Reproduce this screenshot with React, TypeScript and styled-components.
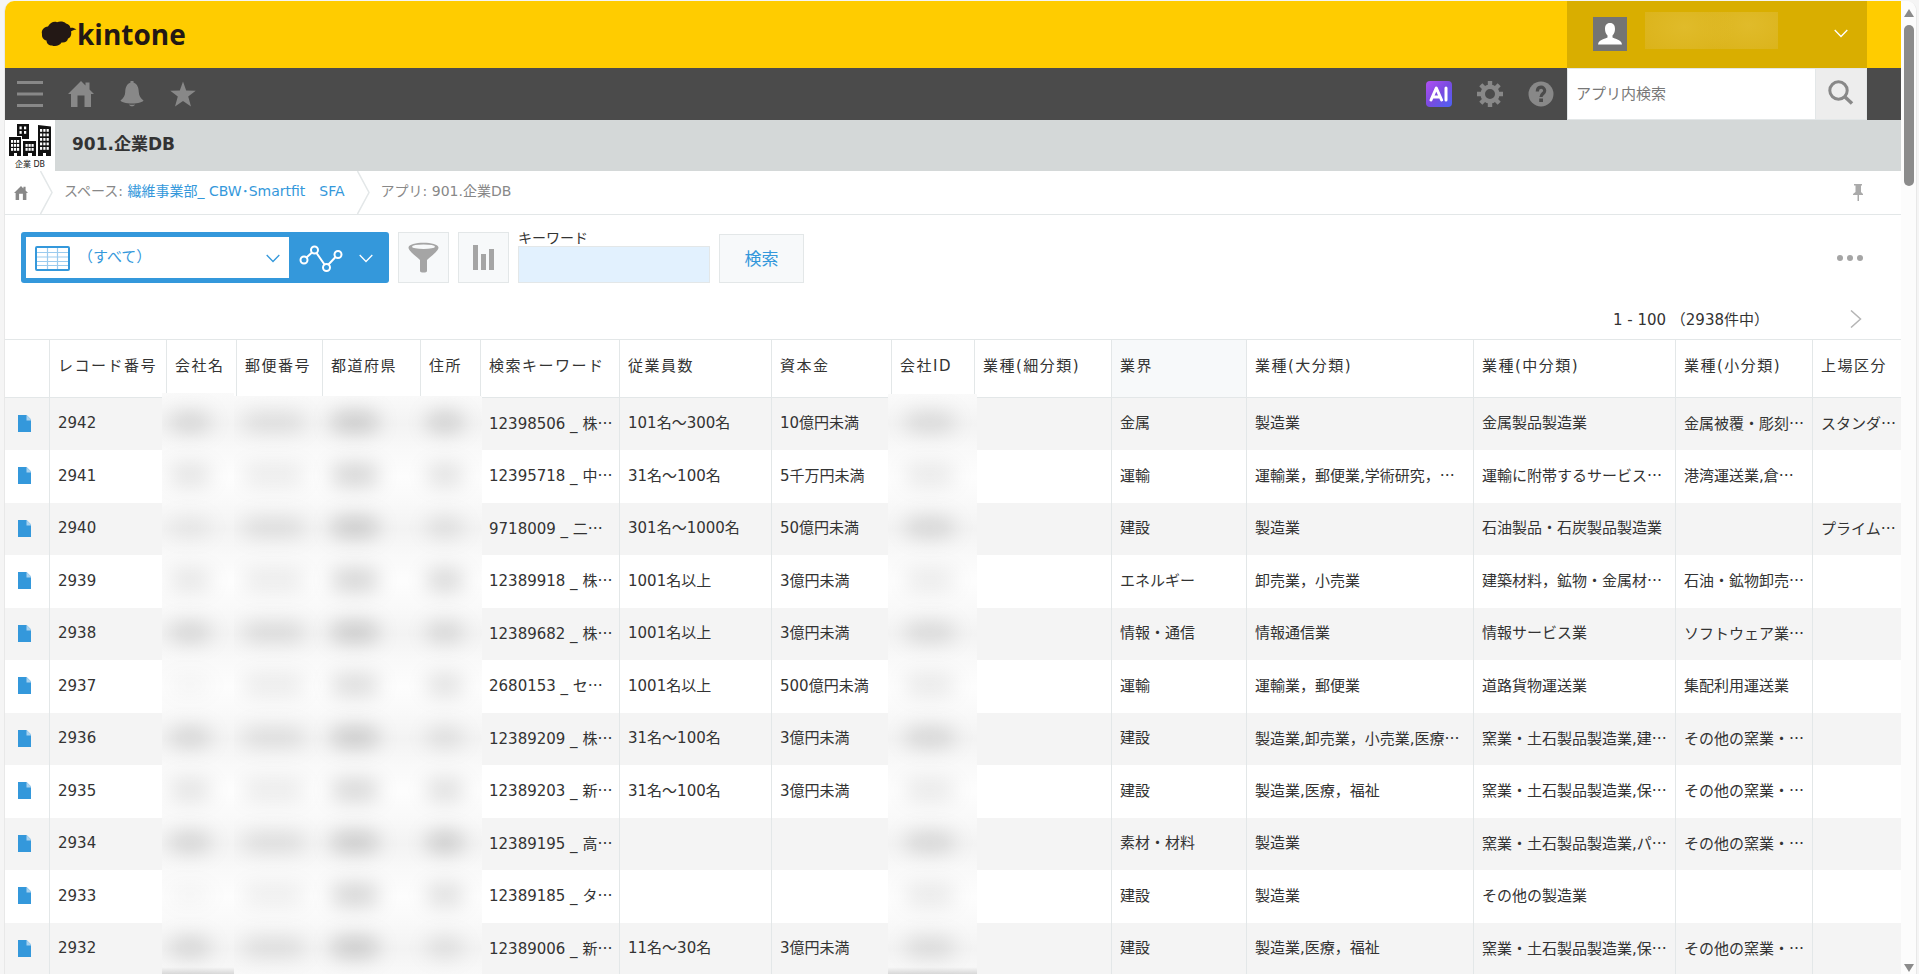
import React from "react";
import styled, { createGlobalStyle } from "styled-components";

const BLUE = "#3498db";
const LINE = "#e3e7e8";
const ICON = "#888888";

const GlobalStyle = createGlobalStyle`
  * { box-sizing: border-box; }
  html, body, #root { height: 100%; }
  body {
    margin: 0;
    overflow: hidden;
    background: #f5f5f5;
    color: #333333;
    font-family: "DejaVu Sans", "Noto Sans CJK JP", sans-serif;
    font-size: 15px;
  }
  button, input, select { font-family: inherit; }
  svg { display: block; flex: none; }
`;

/* ---------- window frame ---------- */

const Frame = styled.div`
  height: 100vh;
  padding: 1px 2px 0 4px;
  background: #f5f5f5;
`;

const Viewport = styled.div`
  height: 100%;
  display: flex;
  overflow: hidden;
  border-left: 1px solid #e8e8e8;
  border-right: 1px solid #e8e8e8;
  border-radius: 10px 10px 0 0;
  background: #ffffff;
`;

const Page = styled.div`
  flex: 1;
  min-width: 0;
  overflow: hidden;
`;

const Scrollbar = styled.div`
  flex: none;
  width: 15px;
  padding: 8px 0 2px;
  display: flex;
  flex-direction: column;
  align-items: center;
  background: #fcfcfc;
`;

const ScrollTrack = styled.div`
  flex: 1;
  padding-top: 8px;
`;

const ScrollThumb = styled.div`
  width: 10px;
  height: 161px;
  border-radius: 5px;
  background: #8b8b8b;
`;

/* ---------- header ---------- */

const BrandBar = styled.header`
  height: 67px;
  padding: 0 34px 0 36px;
  display: flex;
  justify-content: space-between;
  background: #ffcc00;
`;

const Brand = styled.a`
  padding-bottom: 2px;
  display: flex;
  align-items: center;
  color: #231815;
  text-decoration: none;
`;

const BrandName = styled.span`
  font: 700 28px/40px "Open Sans", sans-serif;
`;

const UserMenu = styled.button`
  width: 300px;
  padding: 0 19px 2px 26px;
  display: flex;
  align-items: center;
  gap: 18px;
  border: 0;
  background: #d9ae00;
`;

const Avatar = styled.span`
  width: 34px;
  height: 34px;
  background: #747474;
`;

const HiddenName = styled.span`
  width: 133px;
  height: 37px;
  margin: 0 auto 6px 0;
  background:
    radial-gradient(ellipse 50px 34px at 30% 40%, #e0bb2a, transparent),
    radial-gradient(ellipse 50px 34px at 78% 35%, #e0bb2a, transparent),
    #dbb31a;
`;

const NavBar = styled.nav`
  height: 52px;
  padding: 0 34px 0 12px;
  display: flex;
  justify-content: space-between;
  background: #4b4b4b;
`;

const NavGroup = styled.div`
  display: flex;
  align-items: center;
  gap: 25px;
`;

const IconButton = styled.button`
  width: 26px;
  height: 26px;
  padding: 0;
  border: 0;
  background: none;
  color: ${ICON};
`;

const NavTools = styled.div`
  display: flex;
  gap: 13px;
`;

const SearchForm = styled.form`
  width: 300px;
  display: flex;
`;

const SearchInput = styled.input`
  flex: 1;
  min-width: 0;
  padding: 0 8px;
  border: 1px solid ${LINE};
  border-right: 0;
  border-radius: 0;
  background: #ffffff;
  font-size: 15px;
  &::placeholder { color: #777777; opacity: 1; }
`;

const SearchButton = styled.button`
  width: 52px;
  padding: 0 0 2px 12px;
  border: 1px solid ${LINE};
  background: #ededed;
`;

const TitleBar = styled.div`
  height: 51px;
  display: flex;
  align-items: center;
  gap: 17px;
  background: #d4d8d8;
`;

const AppIcon = styled.div`
  width: 50px;
  height: 51px;
  padding-top: 3px;
  display: flex;
  flex-direction: column;
  align-items: center;
  background: #ffffff;
`;

const AppIconCaption = styled.span`
  font-size: 8px;
  line-height: 16px;
  color: #222222;
  white-space: nowrap;
`;

const AppTitle = styled.h1`
  margin: 0 0 4px;
  font-size: 17px;
  line-height: 24px;
  font-weight: 700;
`;

const Breadcrumb = styled.div`
  height: 44px;
  padding: 0 38px 0 9px;
  display: flex;
  align-items: center;
  border-bottom: 1px solid ${LINE};
  color: ${ICON};
  font-size: 14px;
`;

const Crumb = styled.span`
  padding: 0 0 6px 11px;
  white-space: pre;
  & + svg { margin-left: 12px; }
`;

const CrumbLink = styled.a`
  color: ${BLUE};
  text-decoration: none;
`;

const HomeLink = styled.a`
  margin-right: 12px;
  color: ${ICON};
`;

const PinButton = styled.button`
  margin-left: auto;
  padding: 0;
  border: 0;
  background: none;
  color: #aaaaaa;
`;

/* ---------- toolbar ---------- */

const Toolbar = styled.div`
  padding: 16px 38px 0 16px;
  display: flex;
  align-items: flex-end;
  gap: 9px;
`;

const ViewPicker = styled.div`
  width: 368px;
  height: 51px;
  padding: 5px 0 5px 5px;
  display: flex;
  border-radius: 3px;
  background: ${BLUE};
`;

const ViewChoice = styled.div`
  width: 263px;
  padding: 2px 9px 0;
  display: flex;
  align-items: center;
  background: #ffffff;
`;

const ViewSelect = styled.select`
  flex: 1;
  min-width: 0;
  height: 36px;
  margin-bottom: 4px;
  padding: 0 0 0 8px;
  border: 0;
  appearance: none;
  background: none;
  color: ${BLUE};
  font-size: 15px;
`;

const GraphButton = styled.button`
  flex: 1;
  padding: 2px 16px 0 10px;
  display: flex;
  align-items: center;
  justify-content: space-between;
  border: 0;
  background: none;
`;

const ToolButton = styled.button`
  width: 51px;
  height: 51px;
  padding: 0;
  display: flex;
  align-items: center;
  justify-content: center;
  border: 1px solid ${LINE};
  background: #f7f9fa;
`;

const Keyword = styled.div`
  width: 192px;
  display: flex;
  flex-direction: column;
`;

const KeywordLabel = styled.label`
  font-size: 14px;
  line-height: 15px;
`;

const KeywordInput = styled.input`
  height: 37px;
  padding: 0 8px;
  border: 1px solid ${LINE};
  background: #e2f1fe;
  font-size: 15px;
`;

const RunSearch = styled.button`
  width: 85px;
  height: 49px;
  padding: 0 0 2px;
  border: 1px solid ${LINE};
  background: #f7f9fa;
  color: ${BLUE};
  font-size: 17px;
`;

const MoreButton = styled.button`
  height: 51px;
  margin-left: auto;
  padding: 0;
  border: 0;
  background: none;
`;

const Pager = styled.div`
  height: 56px;
  padding: 15px 39px 0;
  display: flex;
  align-items: center;
  justify-content: flex-end;
  gap: 81px;
  white-space: pre;
`;

const PagerButton = styled.button`
  padding: 0;
  border: 0;
  background: none;
`;

/* ---------- record table ---------- */

const TableArea = styled.div`
  position: relative;
`;

const Table = styled.table`
  width: 100%;
  table-layout: fixed;
  border-collapse: separate;
  border-spacing: 0;
  line-height: 18px;
  white-space: nowrap;
`;

const HeadCell = styled.th<{ $shaded?: boolean }>`
  height: 59px;
  padding: 0 0 5px 8px;
  overflow: hidden;
  border: 1px solid ${LINE};
  border-right: 0;
  background: ${(p) => (p.$shaded ? "#f7f9fa" : "#ffffff")};
  font-weight: 400;
  letter-spacing: 0.1em;
  text-align: left;
  &:first-child { border-left: 0; }
`;

const Row = styled.tr`
  height: 52px;
  background: #f4f4f4;
  &:nth-child(even) {
    height: 53px;
    background: #ffffff;
  }
`;

const Cell = styled.td`
  padding: 0 0 2px 8px;
  overflow: hidden;
  border-left: 1px solid ${LINE};
  &:first-child {
    padding-left: 13px;
    border-left: 0;
  }
`;

const Dots = styled.span`
  font-family: "Noto Sans CJK JP", sans-serif;
`;

/* Frosted strips that hide the private columns. */
const Cover = styled.div<{ $left: number; $top: number; $width: number; $columns: string; $edge?: boolean }>`
  position: absolute;
  left: ${(p) => p.$left}px;
  top: ${(p) => p.$top}px;
  bottom: 0;
  width: ${(p) => p.$width}px;
  padding-top: ${(p) => 59 - p.$top}px;
  overflow: hidden;
  display: grid;
  grid-template-columns: ${(p) => p.$columns};
  grid-auto-rows: 52px 53px;
  place-items: center;
  background: linear-gradient(#f9f9f9, #f3f3f3 26px, #f9f9f9 52px, #fdfdfd 79px, #f9f9f9);
  background-size: 100% 105px;
  background-origin: content-box;
  &::after {
    content: "";
    position: absolute;
    inset: auto 0 0;
    height: ${(p) => (p.$edge ? 8 : 0)}px;
    background: linear-gradient(transparent, rgba(0, 0, 0, 0.15));
  }
`;

const Smudge = styled.span<{ $size: number; $tone: number }>`
  width: ${(p) => p.$size}px;
  height: 22px;
  margin-bottom: 4px;
  border-radius: 11px;
  background: rgba(0, 0, 0, ${(p) => p.$tone / 100});
  filter: blur(10px);
`;

/* ---------- drawings ---------- */

const LogoMark = () => (
  <svg width="36" height="26" viewBox="0 0 36 26" fill="#231815">
    <path d="M1 13C0 9 3 6 7 5.500C9 1.500 13 0 16 1.200C19 0 23 .5 25 2.500C28 3 29 5 29.500 7C31 6.500 33 6.800 35.500 8.500C33 8.700 31.500 9.500 30 10.500C31 14 29 17 27 17.500C26.500 20.500 24 22 20.500 21.500C19 24.500 14.500 26 11 24.500C8 24.500 5.500 22.500 5.500 19.500C2.500 19 .5 16 1 13Z" />
  </svg>
);

const Chevron = ({ color }: { color: string }) => (
  <svg width="14" height="9" viewBox="0 0 14 9" fill="none" stroke={color} strokeWidth="1.300">
    <path d="M.7 1L7 7.500L13.300 1" />
  </svg>
);

const HouseIcon = ({ size }: { size: number }) => (
  <svg width={size} height={size} viewBox="0 0 26 26" fill="currentColor">
    <path d="M0 13L13 0L17.500 4.500V1.500H21.500V8.500L26 13H23V26H16.500V14.500H9.500V26H3V13Z" />
  </svg>
);

const MenuIcon = () => (
  <svg width="26" height="26" viewBox="0 0 26 26" fill="currentColor">
    <path d="M0 0H26V3H0ZM0 11.500H26V14.500H0ZM0 23H26V26H0Z" />
  </svg>
);

const BellIcon = () => (
  <svg width="26" height="26" viewBox="0 0 26 26" fill="currentColor">
    <path d="M11.500 1.500V0H14.500V1.500C18.500 3 19.500 6.500 19.800 11C20 15 21.500 17 24.500 19.500C24.500 21 19 22.500 13 22.500S1.500 21 1.500 19.500C4.500 17 6 15 6.200 11C6.500 6.500 7.500 3 11.500 1.500ZM10 23.500C12 23.800 14 23.800 16 23.500C15.500 24.500 14.500 25.300 13 25.300S10.500 24.500 10 23.500Z" />
  </svg>
);

const StarIcon = () => (
  <svg width="26" height="26" viewBox="0 0 26 26" fill="currentColor">
    <path d="M13 .5L16.200 9.500L25.700 9.700L18.200 15.500L21 25.500L13 20L5 25.500L7.800 15.500L.3 9.700L9.800 9.500Z" />
  </svg>
);

const AiIcon = () => (
  <svg width="26" height="26" viewBox="0 0 26 26">
    <defs>
      <linearGradient id="ai" x1="0" y1="0" x2="1" y2="1">
        <stop offset="0" stopColor="#b14ff5" />
        <stop offset=".5" stopColor="#7a4be0" />
        <stop offset="1" stopColor="#4b62f5" />
      </linearGradient>
    </defs>
    <rect width="26" height="26" rx="4" fill="url(#ai)" />
    <g fill="none" stroke="#fff" strokeWidth="3" strokeLinecap="round" strokeLinejoin="round">
      <path d="M5 19L10.300 7L15.600 19M7.500 16H13" />
      <path d="M20 7V19" />
    </g>
  </svg>
);

const GearIcon = () => (
  <svg width="26" height="26" viewBox="0 0 26 26" fill="none" stroke="currentColor">
    <circle cx="13" cy="13" r="7.300" strokeWidth="4.600" />
    <g strokeWidth="4.400">
      {[0, 45, 90, 135].map((a) => (
        <path key={a} d="M13 0V4.500M13 21.500V26" transform={`rotate(${a} 13 13)`} />
      ))}
    </g>
  </svg>
);

const HelpIcon = () => (
  <svg width="26" height="26" viewBox="0 0 26 26">
    <circle cx="13" cy="13" r="12.500" fill="currentColor" />
    <path d="M9.300 10.500C9.300 4.800 16.700 5 16.700 9.800C16.700 12.800 13 12.500 13 16" fill="none" stroke="#4b4b4b" strokeWidth="3.200" />
    <path d="M11.200 17.500H15V21H11.200Z" fill="#4b4b4b" />
  </svg>
);

const Magnifier = () => (
  <svg width="26" height="26" viewBox="0 0 26 26" fill="none" stroke={ICON} strokeWidth="3">
    <circle cx="10.500" cy="10.500" r="8.700" />
    <path d="M16.500 16.500L24 23.500" strokeWidth="3.500" />
  </svg>
);

const PersonIcon = () => (
  <svg width="34" height="34" viewBox="0 0 34 34" fill="#fff">
    <path d="M17 6C20.500 6 22 8.500 22 12C22 15 21 17 19.500 18.500V20.500C22 22 28.500 22.500 29 27.500H5C5.500 22.500 12 22 14.500 20.500V18.500C13 17 12 15 12 12C12 8.500 13.500 6 17 6Z" />
  </svg>
);

const BuildingsIcon = () => (
  <svg width="44" height="34" viewBox="0 0 44 34">
    <path fill="#111" d="M9 1H21V16H14V13H9ZM30 2L43 3.500V33H38V30H35V33H30ZM1 14H13V33H9V30H6V33H1ZM15 18H28V33H24V30H20V33H15Z" />
    <g fill="#fff">
      {[
        [11.5, 3.5], [16, 3.5], [11.5, 8], [16, 8],
        [3, 17], [6, 17], [9, 17], [3, 21], [6, 21], [9, 21], [3, 25], [6, 25], [9, 25],
        [17.500, 21], [20.500, 21], [23.500, 21], [17.500, 25], [20.500, 25], [23.500, 25],
        [32, 6], [35.300, 6], [38.600, 6], [32, 10.500], [35.300, 10.500], [38.600, 10.500],
        [32, 15], [35.300, 15], [38.600, 15], [32, 19.500], [35.300, 19.500], [38.600, 19.500],
        [32, 24], [35.300, 24], [38.600, 24],
      ].map(([x, y]) => (
        <rect key={`${x}-${y}`} x={x} y={y} width="2.200" height="2.800" />
      ))}
    </g>
  </svg>
);

const CrumbArrow = () => (
  <svg width="13" height="43" viewBox="0 0 13 43" fill="none" stroke={LINE} strokeWidth="1.500">
    <path d="M.5 0L12 21.500L.5 43" />
  </svg>
);

const PinIcon = () => (
  <svg width="10" height="17" viewBox="0 0 10 17" fill="currentColor">
    <path d="M1 0H9V1.500H8V8L10 10V11H6V17H4.500V11H0V10L2.500 8V1.500H1Z" />
  </svg>
);

const GridIcon = () => (
  <svg width="35" height="25" viewBox="0 0 35 25" fill="none">
    <path d="M2 6.500H33M2 11H33M2 15.500H33M2 19.500H33M12.500 2V23M22.500 2V23" stroke="#9bcbee" strokeWidth="1.200" />
    <rect x="1" y="1" width="33" height="23" rx="1" stroke={BLUE} strokeWidth="2" />
  </svg>
);

const GraphIcon = () => (
  <svg width="44" height="28" viewBox="0 0 44 28" fill="none" stroke="#fff" strokeWidth="2">
    <circle cx="5" cy="15" r="3.500" />
    <circle cx="15.500" cy="5" r="3.500" />
    <circle cx="27.500" cy="22.500" r="3.500" />
    <circle cx="39" cy="9.500" r="3.500" />
    <path d="M7.500 12.500L13 7.500M17.500 8L25.500 19.500M29.500 19.500L36.500 12" />
  </svg>
);

const FunnelIcon = () => (
  <svg width="31" height="31" viewBox="0 0 31 31">
    <path fill="#a5a5a5" d="M.5 5.500C.5 -1 30.500 -1 30.500 5.500C30.500 9 22 15 19 18V29C19 31 12 31 12 29V18C9 15 .5 9 .5 5.500Z" />
    <ellipse cx="15.500" cy="4.700" rx="11.500" ry="2.300" fill="#f7f9fa" />
  </svg>
);

const BarsIcon = () => (
  <svg width="21" height="25" viewBox="0 0 21 25" fill="#a5a5a5">
    <path d="M0 0H5V25H0ZM8 9H13V25H8ZM16 4H21V25H16Z" />
  </svg>
);

const FileIcon = () => (
  <svg width="13" height="17" viewBox="0 0 13 17">
    <path d="M0 0H8.500L13 4.500V17H0Z" fill={BLUE} />
    <path d="M8.500 0L13 4.500V5.500H8.500Z" fill="#a9d2ef" />
  </svg>
);

/* ---------- data ---------- */

const columns: [string, number | undefined][] = [
  ["", 44], ["レコード番号", 117], ["会社名", 70], ["郵便番号", 86], ["都道府県", 98], ["住所", 60],
  ["検索キーワード", 139], ["従業員数", 152], ["資本金", 120], ["会社ID", 83], ["業種(細分類)", 137],
  ["業界", 135], ["業種(大分類)", 227], ["業種(中分類)", 202], ["業種(小分類)", 137], ["上場区分", undefined],
];

type Rec = [id: string, keyword: string, staff: string, capital: string, field: string, large: string, middle: string, small: string, listed: string];

const records: Rec[] = [
  ["2942", "12398506 _ 株…", "101名～300名", "10億円未満", "金属", "製造業", "金属製品製造業", "金属被覆・彫刻…", "スタンダ…"],
  ["2941", "12395718 _ 中…", "31名～100名", "5千万円未満", "運輸", "運輸業，郵便業,学術研究，…", "運輸に附帯するサービス…", "港湾運送業,倉…", ""],
  ["2940", "9718009 _ 二…", "301名～1000名", "50億円未満", "建設", "製造業", "石油製品・石炭製品製造業", "", "プライム…"],
  ["2939", "12389918 _ 株…", "1001名以上", "3億円未満", "エネルギー", "卸売業，小売業", "建築材料，鉱物・金属材…", "石油・鉱物卸売…", ""],
  ["2938", "12389682 _ 株…", "1001名以上", "3億円未満", "情報・通信", "情報通信業", "情報サービス業", "ソフトウェア業…", ""],
  ["2937", "2680153 _ セ…", "1001名以上", "500億円未満", "運輸", "運輸業，郵便業", "道路貨物運送業", "集配利用運送業", ""],
  ["2936", "12389209 _ 株…", "31名～100名", "3億円未満", "建設", "製造業,卸売業，小売業,医療…", "窯業・土石製品製造業,建…", "その他の窯業・…", ""],
  ["2935", "12389203 _ 新…", "31名～100名", "3億円未満", "建設", "製造業,医療，福祉", "窯業・土石製品製造業,保…", "その他の窯業・…", ""],
  ["2934", "12389195 _ 高…", "", "", "素材・材料", "製造業", "窯業・土石製品製造業,パ…", "その他の窯業・…", ""],
  ["2933", "12389185 _ タ…", "", "", "建設", "製造業", "その他の製造業", "", ""],
  ["2932", "12389006 _ 新…", "11名～30名", "3億円未満", "建設", "製造業,医療，福祉", "窯業・土石製品製造業,保…", "その他の窯業・…", ""],
];

const companyTones = [12, 10, 6, 9, 12, 3, 12, 10, 13, 3, 12];
const addressTones = [
  [9, 17, 15], [7, 16, 11], [9, 17, 9], [7, 16, 15], [10, 17, 12], [7, 13, 11],
  [9, 17, 9], [7, 15, 12], [9, 17, 17], [6, 16, 12], [9, 17, 9],
];
const idTones = [11, 8, 12, 7, 11, 8, 12, 8, 12, 8, 10];

const CellText = ({ text }: { text: string }) =>
  text.endsWith("…") ? <>{text.slice(0, -1)}<Dots>…</Dots></> : <>{text}</>;

export default function App() {
  return (
    <Frame>
      <GlobalStyle />
      <Viewport>
        <Page>
          <BrandBar>
            <Brand href="#">
              <LogoMark />
              <BrandName>kintone</BrandName>
            </Brand>
            <UserMenu aria-label="ユーザーメニュー">
              <Avatar><PersonIcon /></Avatar>
              <HiddenName />
              <Chevron color="#fff" />
            </UserMenu>
          </BrandBar>

          <NavBar>
            <NavGroup>
              <IconButton aria-label="メニュー"><MenuIcon /></IconButton>
              <IconButton aria-label="ポータル"><HouseIcon size={26} /></IconButton>
              <IconButton aria-label="通知"><BellIcon /></IconButton>
              <IconButton aria-label="ブックマーク"><StarIcon /></IconButton>
            </NavGroup>
            <NavTools>
              <NavGroup>
                <IconButton aria-label="AI"><AiIcon /></IconButton>
                <IconButton aria-label="設定"><GearIcon /></IconButton>
                <IconButton aria-label="ヘルプ"><HelpIcon /></IconButton>
              </NavGroup>
              <SearchForm>
                <SearchInput aria-label="アプリ内検索" placeholder="アプリ内検索" />
                <SearchButton type="button" aria-label="検索する"><Magnifier /></SearchButton>
              </SearchForm>
            </NavTools>
          </NavBar>

          <TitleBar>
            <AppIcon>
              <BuildingsIcon />
              <AppIconCaption>企業 DB</AppIconCaption>
            </AppIcon>
            <AppTitle>901.企業DB</AppTitle>
          </TitleBar>

          <Breadcrumb>
            <HomeLink href="#" aria-label="ホーム"><HouseIcon size={14} /></HomeLink>
            <CrumbArrow />
            <Crumb>スペース: <CrumbLink href="#">繊維事業部_ CBW･Smartfit　SFA</CrumbLink></Crumb>
            <CrumbArrow />
            <Crumb>アプリ: 901.企業DB</Crumb>
            <PinButton aria-label="固定"><PinIcon /></PinButton>
          </Breadcrumb>

          <Toolbar>
            <ViewPicker>
              <ViewChoice>
                <GridIcon />
                <ViewSelect aria-label="一覧"><option>（すべて）</option></ViewSelect>
                <Chevron color={BLUE} />
              </ViewChoice>
              <GraphButton aria-label="グラフ">
                <GraphIcon />
                <Chevron color="#fff" />
              </GraphButton>
            </ViewPicker>
            <ToolButton aria-label="絞り込む"><FunnelIcon /></ToolButton>
            <ToolButton aria-label="集計する"><BarsIcon /></ToolButton>
            <Keyword>
              <KeywordLabel htmlFor="keyword">キーワード</KeywordLabel>
              <KeywordInput id="keyword" />
            </Keyword>
            <RunSearch>検索</RunSearch>
            <MoreButton aria-label="オプション">
              <svg width="26" height="6" viewBox="0 0 26 6" fill="#a5a5a5">
                <circle cx="3" cy="3" r="3" /><circle cx="13" cy="3" r="3" /><circle cx="23" cy="3" r="3" />
              </svg>
            </MoreButton>
          </Toolbar>

          <Pager>
            <span>1 - 100 （2938件中）</span>
            <PagerButton aria-label="次へ">
              <svg width="12" height="18" viewBox="0 0 12 18" fill="none" stroke="#b5b5b5" strokeWidth="1.500">
                <path d="M1 .5L10.500 9L1 17.500" />
              </svg>
            </PagerButton>
          </Pager>

          <TableArea>
            <Table>
              <colgroup>
                {columns.map(([name, width]) => <col key={name} width={width} />)}
              </colgroup>
              <thead>
                <tr>
                  {columns.map(([name]) => (
                    <HeadCell key={name} scope="col" $shaded={name === "業界"}>{name}</HeadCell>
                  ))}
                </tr>
              </thead>
              <tbody>
                {records.map(([id, keyword, staff, capital, field, large, middle, small, listed]) => (
                  <Row key={id}>
                    <Cell><a href="#" aria-label={id}><FileIcon /></a></Cell>
                    <Cell>{id}</Cell>
                    <Cell /><Cell /><Cell /><Cell />
                    <Cell><CellText text={keyword} /></Cell>
                    <Cell>{staff}</Cell>
                    <Cell>{capital}</Cell>
                    <Cell /><Cell />
                    <Cell>{field}</Cell>
                    <Cell><CellText text={large} /></Cell>
                    <Cell><CellText text={middle} /></Cell>
                    <Cell><CellText text={small} /></Cell>
                    <Cell><CellText text={listed} /></Cell>
                  </Row>
                ))}
              </tbody>
            </Table>
            <Cover $left={229} $top={57} $width={248} $columns="80px 82px 98px">
              {addressTones.flatMap((tones, r) =>
                tones.map((tone, c) => <Smudge key={`${r}-${c}`} $size={[62, 48, 38][c]} $tone={tone} />)
              )}
            </Cover>
            <Cover $left={157} $top={54} $width={72} $columns="56px" $edge>
              {companyTones.map((tone, r) => <Smudge key={r} $size={42} $tone={tone} />)}
            </Cover>
            <Cover $left={883} $top={55} $width={89} $columns="84px" $edge>
              {idTones.map((tone, r) => <Smudge key={r} $size={50} $tone={tone} />)}
            </Cover>
          </TableArea>
        </Page>

        <Scrollbar aria-hidden="true">
          <svg width="10" height="8" viewBox="0 0 10 8" fill="#8b8b8b"><path d="M5 0L10 8H0Z" /></svg>
          <ScrollTrack><ScrollThumb /></ScrollTrack>
          <svg width="10" height="8" viewBox="0 0 10 8" fill="#8b8b8b"><path d="M0 0H10L5 8Z" /></svg>
        </Scrollbar>
      </Viewport>
    </Frame>
  );
}
